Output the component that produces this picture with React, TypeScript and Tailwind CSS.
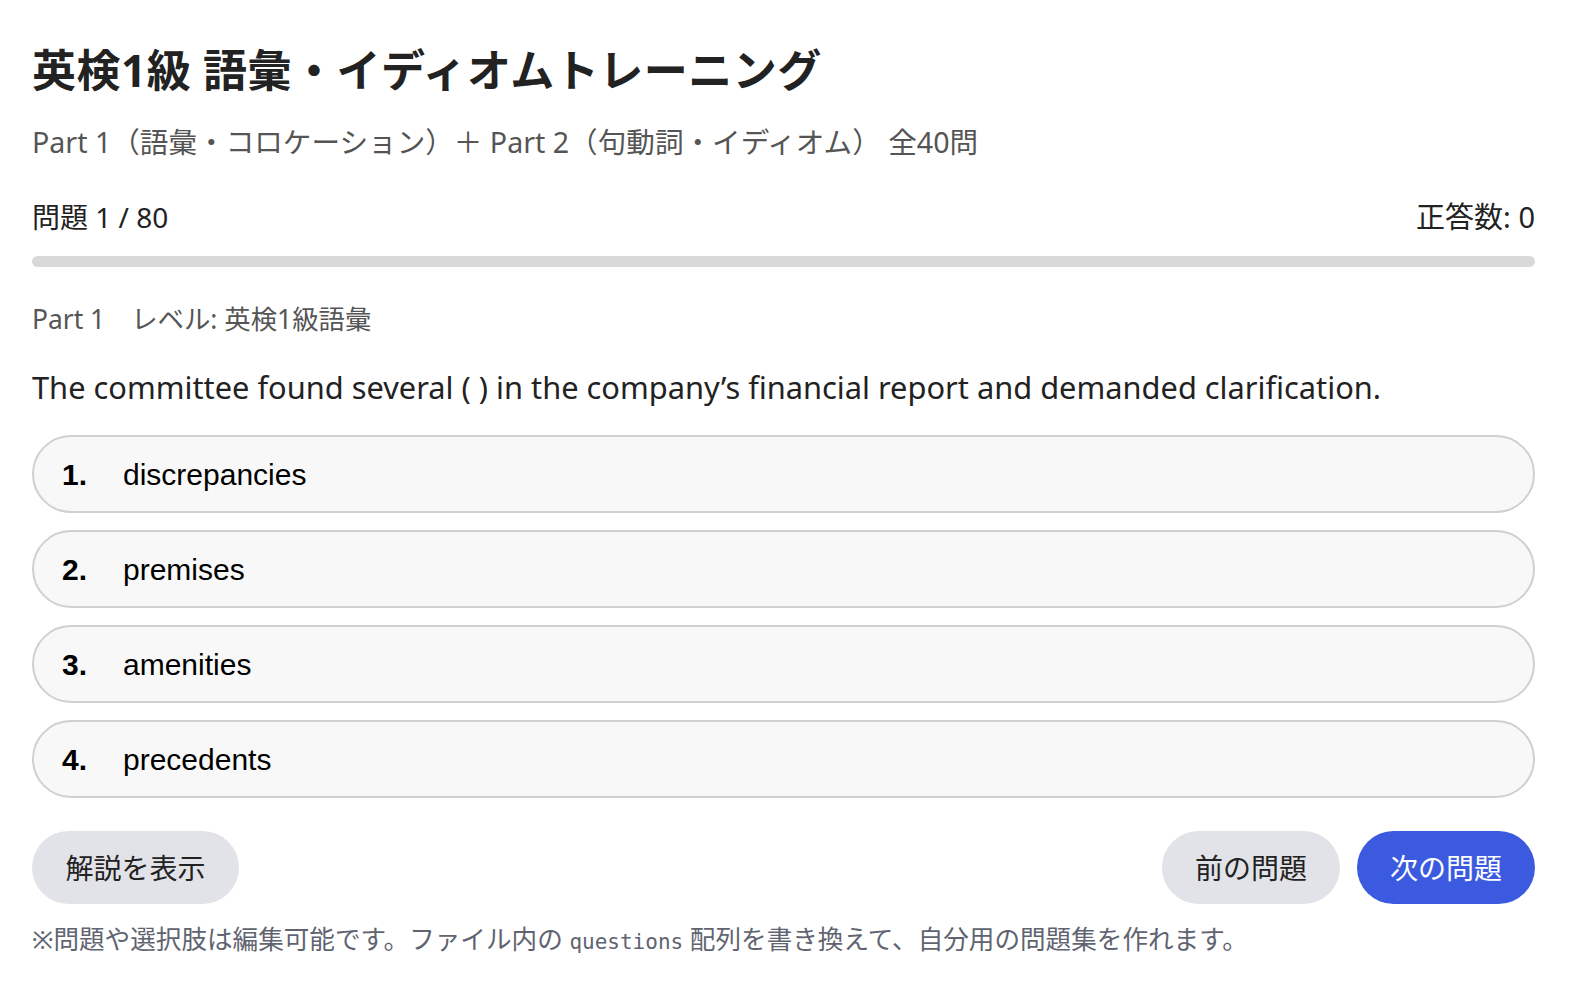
import React from "react";

type Question = {
  part: number;
  level: string;
  text: string;
  choices: string[];
};

const questions: Question[] = [
  {
    part: 1,
    level: "英検1級語彙",
    text: "The committee found several ( ) in the company’s financial report and demanded clarification.",
    choices: ["discrepancies", "premises", "amenities", "precedents"],
  },
];

const jp = "font-['Noto_Sans','Noto_Sans_CJK_JP',sans-serif]";

export default function App() {
  const q = questions[0];
  const index = 0;
  const total = 80;
  const correct = 0;

  return (
    <main className={`min-h-screen bg-white pl-[32px] pr-[37px] pt-[40px] text-[#222] ${jp}`}>
      <h1 className="text-[44px] font-bold leading-[60px] tracking-[0.5px]">
        英検1級 語彙・イディオムトレーニング
      </h1>
      <p className="mt-[22px] text-[28.6px] leading-[40px] text-[#555]">
        Part 1（語彙・コロケーション）＋ Part 2（句動詞・イディオム） 全40問
      </p>

      <div className="mt-[35px] flex items-center justify-between text-[28px] leading-[40px]">
        <span>
          問題 {index + 1} / {total}
        </span>
        <span className="text-[29px]">正答数: {correct}</span>
      </div>
      <div className="mt-[19px] h-[11px] w-full rounded-full bg-[#d9d9d9]" />

      <div className="mt-[32px] flex gap-[26px] text-[26.4px] leading-[40px] text-[#555]">
        <span>Part {q.part}</span>
        <span>レベル: {q.level}</span>
      </div>

      <p className="mt-[28px] text-[30.8px] leading-[40px]">{q.text}</p>

      <div className="mt-[28px] flex flex-col gap-[17px]">
        {q.choices.map((c, i) => (
          <button
            key={c}
            className="flex h-[78px] w-full items-center rounded-full border-2 border-[#cfcfd4] bg-[#f8f8f8] pl-[28px] text-left font-['Liberation_Sans',Arial,sans-serif] text-[30px] text-black"
          >
            <span className="w-[61px] font-bold">{i + 1}.</span>
            <span>{c}</span>
          </button>
        ))}
      </div>

      <div className="mt-[33px] flex items-center justify-between">
        <button className="h-[73px] w-[207px] rounded-full bg-[#e2e3e8] text-[28px] text-[#222]">
          解説を表示
        </button>
        <div className="flex gap-[17px]">
          <button className="h-[73px] w-[178px] rounded-full bg-[#e2e3e8] text-[28px] text-[#222]">
            前の問題
          </button>
          <button className="h-[73px] w-[178px] rounded-full bg-[#3b5ae0] text-[28px] text-white">
            次の問題
          </button>
        </div>
      </div>

      <p className="mt-[18px] text-[25.6px] leading-[36px] text-[#5f6470]">
        ※問題や選択肢は編集可能です。ファイル内の{" "}
        <code className="font-['DejaVu_Sans_Mono',monospace] text-[21px]">questions</code>{" "}
        配列を書き換えて、自分用の問題集を作れます。
      </p>
    </main>
  );
}
